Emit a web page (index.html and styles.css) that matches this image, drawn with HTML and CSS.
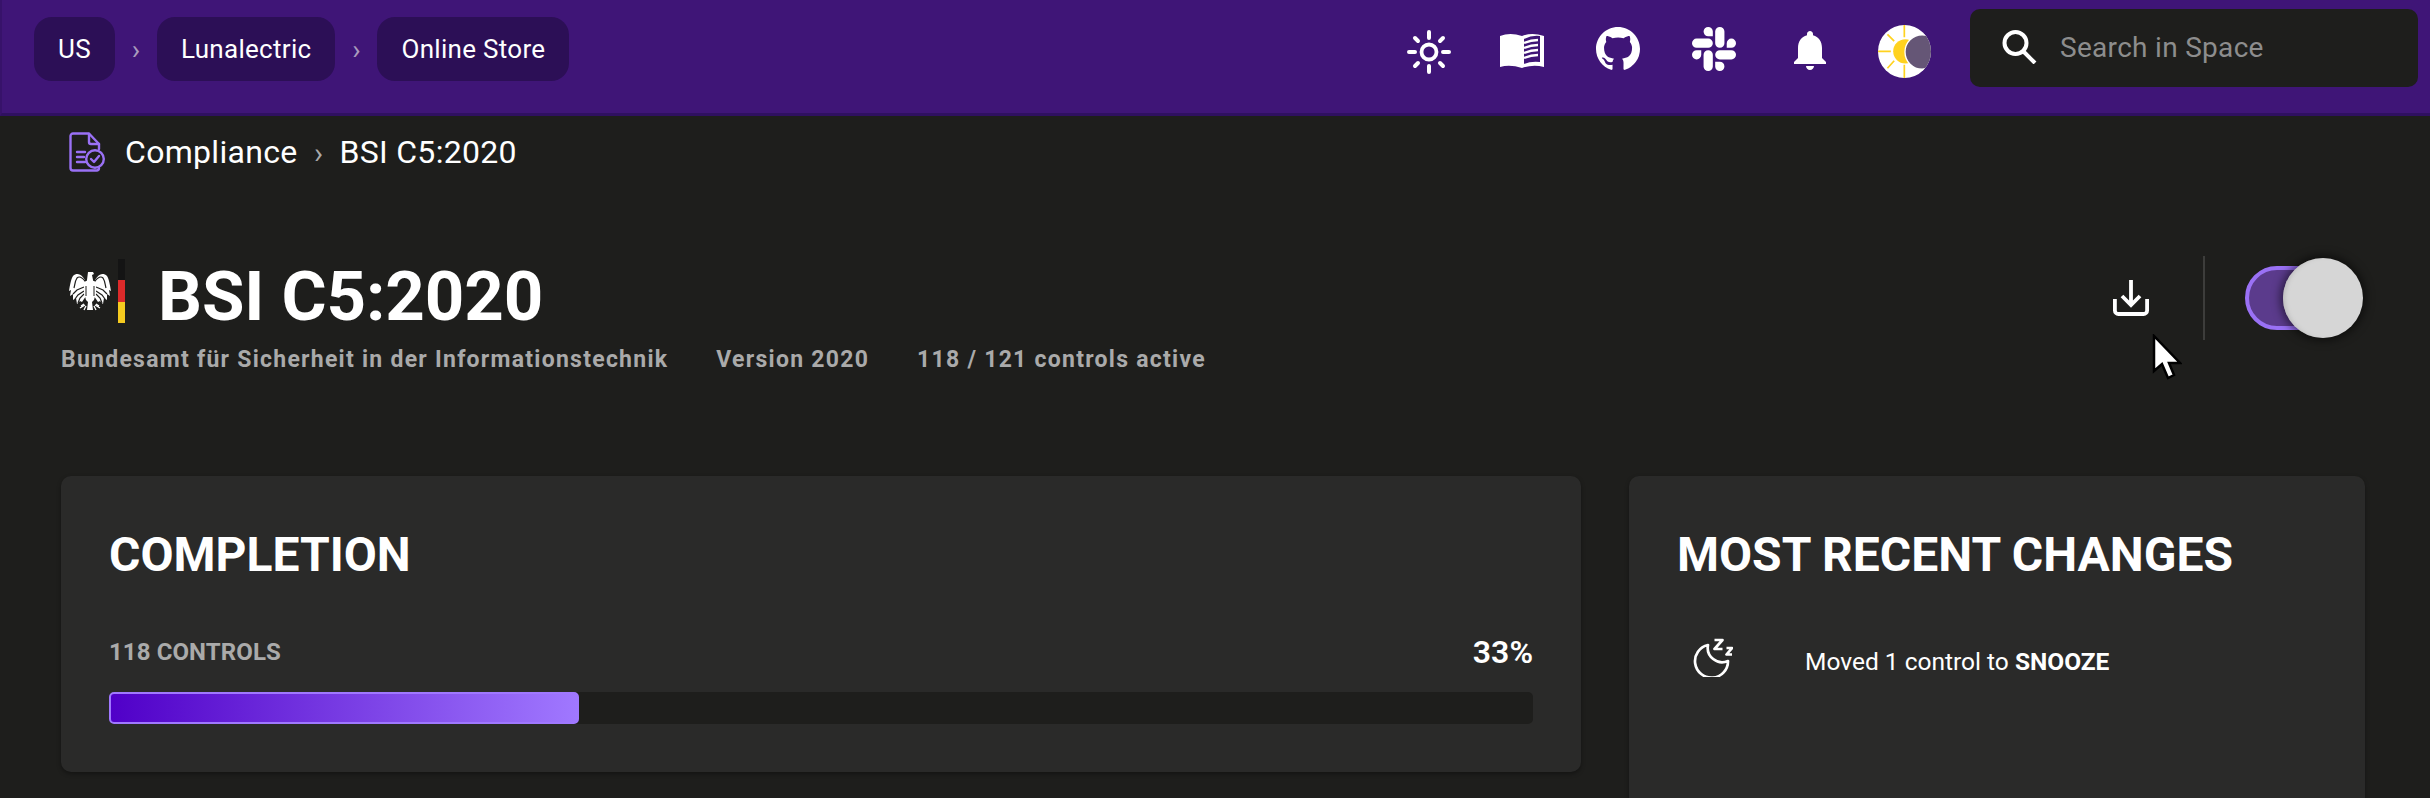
FILE: index.html
```html
<!DOCTYPE html>
<html lang="en">
<head>
<meta charset="utf-8">
<title>BSI C5:2020</title>
<link rel="stylesheet" href="styles.css">
</head>
<body>
<header class="topbar">
  <nav class="scope">
    <span class="pill">US</span><span class="sep">›</span>
    <span class="pill">Lunalectric</span><span class="sep">›</span>
    <span class="pill">Online Store</span>
  </nav>
  <div class="tools">
    <svg class="ic ic-sun" viewBox="0 0 44 44" width="44" height="44" fill="none" stroke="#fff" stroke-linecap="round">
      <circle cx="22" cy="22" r="7.500" stroke-width="3.800"/>
      <path stroke-width="4" d="M22 2v6M22 36v6M2 22h6M36 22h6M8 8l3 3M36 8l-3 3M8 36l3-3M36 36l-3-3"/>
    </svg>
    <svg class="ic ic-book" viewBox="0 0 44 35" width="44" height="35">
      <path fill="#fff" d="M0 3Q10-1 22 3 32-1 44 3V34Q33 31 22 35 10 31 0 34Z"/>
      <path fill="#3f1577" d="M24 6Q32 2 40 3V29Q31 28 24 31Z"/>
      <path fill="none" stroke="#fff" stroke-width="2.400" d="M24 10Q31 7 38 7M24 15Q31 12 38 12M24 20Q31 17 38 17M24 25Q31 22 38 22"/>
    </svg>
    <svg class="ic" viewBox="0 0 16 16" width="44" height="44"><path fill="#fff" d="M8 0C3.580 0 0 3.580 0 8c0 3.540 2.290 6.530 5.470 7.590.4.070.55-.17.55-.38 0-.19-.01-.82-.01-1.490-2.010.37-2.530-.49-2.690-.94-.09-.23-.48-.94-.82-1.130-.28-.15-.68-.52-.01-.53.63-.01 1.080.58 1.230.82.72 1.210 1.870.87 2.330.66.07-.52.28-.87.51-1.070-1.780-.2-3.640-.89-3.640-3.950 0-.87.31-1.590.82-2.150-.08-.2-.36-1.020.08-2.120 0 0 .67-.21 2.200.82.64-.18 1.320-.27 2-.27.68 0 1.360.09 2 .27 1.530-1.040 2.200-.82 2.200-.82.44 1.100.16 1.920.08 2.120.51.56.82 1.270.82 2.150 0 3.070-1.870 3.750-3.650 3.950.29.25.54.73.54 1.480 0 1.070-.01 1.930-.01 2.200 0 .21.15.46.55.38A8.013 8.013 0 0016 8c0-4.420-3.580-8-8-8z"/></svg>
    <svg class="ic" viewBox="0 0 24 24" width="44" height="44"><path fill="#fff" d="M5.042 15.165a2.528 2.528 0 0 1-2.520 2.523A2.528 2.528 0 0 1 0 15.165a2.527 2.527 0 0 1 2.522-2.520h2.520v2.520zM6.313 15.165a2.527 2.527 0 0 1 2.521-2.520 2.527 2.527 0 0 1 2.521 2.520v6.313A2.528 2.528 0 0 1 8.834 24a2.528 2.528 0 0 1-2.521-2.522v-6.313zM8.834 5.042a2.528 2.528 0 0 1-2.521-2.520A2.528 2.528 0 0 1 8.834 0a2.528 2.528 0 0 1 2.521 2.522v2.520H8.834zM8.834 6.313a2.528 2.528 0 0 1 2.521 2.521 2.528 2.528 0 0 1-2.521 2.521H2.522A2.528 2.528 0 0 1 0 8.834a2.528 2.528 0 0 1 2.522-2.521h6.312zM18.956 8.834a2.528 2.528 0 0 1 2.522-2.521A2.528 2.528 0 0 1 24 8.834a2.528 2.528 0 0 1-2.522 2.521h-2.522V8.834zM17.688 8.834a2.528 2.528 0 0 1-2.523 2.521 2.527 2.527 0 0 1-2.520-2.521V2.522A2.527 2.527 0 0 1 15.165 0a2.528 2.528 0 0 1 2.523 2.522v6.312zM15.165 18.956a2.528 2.528 0 0 1 2.523 2.522A2.528 2.528 0 0 1 15.165 24a2.527 2.527 0 0 1-2.520-2.522v-2.522h2.520zM15.165 17.688a2.527 2.527 0 0 1-2.520-2.523 2.526 2.526 0 0 1 2.520-2.520h6.313A2.527 2.527 0 0 1 24 15.165a2.528 2.528 0 0 1-2.522 2.523h-6.313z"/></svg>
    <svg class="ic ic-bell" viewBox="0 0 24 24" width="48" height="48"><path fill="#fff" d="M12 22c1.100 0 2-.9 2-2h-4c0 1.100.89 2 2 2zm6-6v-5c0-3.070-1.640-5.640-4.500-6.320V4c0-.83-.67-1.500-1.500-1.500s-1.500.67-1.500 1.500v.68C7.630 5.360 6 7.920 6 11v5l-2 2v1h16v-1l-2-2z"/></svg>
    <svg class="ic ic-avatar" viewBox="0 0 157 157" width="53" height="53">
      <defs><clipPath id="disc"><circle cx="78.500" cy="78.500" r="78.500"/></clipPath></defs>
      <g clip-path="url(#disc)">
        <rect width="157" height="157" fill="#fff"/>
        <path stroke="#ffd21f" stroke-width="5" d="M78 0v36M78 118v39M0 78h38M28 28l20 20M28 128l20-22"/>
        <circle cx="81" cy="78" r="36" fill="#ffd21f"/>
        <circle cx="131" cy="80" r="51" fill="#655676" stroke="#fff" stroke-width="4"/>
      </g>
    </svg>
  </div>
  <div class="search">
    <svg viewBox="0 0 35 34" width="35" height="34" fill="none" stroke="#fff"><circle cx="13.500" cy="13" r="11" stroke-width="4"/><path stroke-width="4" d="M21 21l12 12"/></svg>
    <span class="search-text">Search in Space</span>
  </div>
</header>

<main class="main">
  <div class="crumbs">
    <svg viewBox="0 0 36 40" width="36" height="40" fill="none" stroke="#9a71f5" stroke-width="2.400" stroke-linejoin="round" stroke-linecap="round">
      <path d="M30 12 20 1.500H4A2.500 2.500 0 0 0 1.500 4v32A2.500 2.500 0 0 0 4 38.500h24A2.500 2.500 0 0 0 30 36"/>
      <path d="M20 2v8a2 2 0 0 0 2 2h8v5"/>
      <circle cx="26" cy="27" r="8.800"/>
      <path d="M8 20h8M8 25h7M8 30h8M22 27l3 3 5-6"/>
    </svg>
    <span class="crumb">Compliance</span>
    <span class="crumb-sep">›</span>
    <span class="crumb">BSI C5:2020</span>
  </div>

  <section class="head">
    <div class="head-left">
      <div class="title-row">
        <svg class="eagle" viewBox="0 0 42 40" width="42" height="40">
          <g id="half">
            <path fill="#fff" d="M17 12C15 5 9 0 4 5 2 8 1 14 0 20l2-1-1 6 3-2v6l3-2 1 6 3-3 2 1 4-6Z"/>
            <path fill="none" stroke="#1e1e1c" stroke-width="1.200" d="M16 10C13 6 10 5 8 7 6 10 6 13 5 17M15 16 8 19 4 23M15 20 9 24 6 28M15 23 11 27 9 32"/>
            <path fill="none" stroke="#fff" stroke-width="1.300" d="M15 33l-3 2M16 34l-5 3M17 35l-2 4"/>
          </g>
          <use href="#half" transform="matrix(-1 0 0 1 42 0)"/>
          <path fill="#fff" d="M19 1h5l1 2-2 1 1 5 3 3v10l-2 7-2 2 1 8h-6l1-8-2-2-2-7V12l3-3Z"/>
          <path fill="none" stroke="#1e1e1c" stroke-width="1" d="M17 15v10M25 15v10M15 10l3-1M27 10l-3-1"/>
        </svg>
        <span class="flag"><i class="flag-k"></i><i class="flag-r"></i><i class="flag-y"></i></span>
        <h1 class="title">BSI C5:2020</h1>
      </div>
      <div class="meta">
        <span>Bundesamt für Sicherheit in der Informationstechnik</span>
        <span>Version 2020</span>
        <span>118 / 121 controls active</span>
      </div>
    </div>
    <div class="actions">
      <svg viewBox="0 0 36 36" width="36" height="36" fill="none" stroke="#fff" stroke-width="3.800"><path d="M18 0v24M9 16l9 9 9-9"/><path d="M1.900 19v11.500a3.500 3.500 0 0 0 3.500 3.500h25.200a3.500 3.500 0 0 0 3.500-3.500V19"/></svg>
      <span class="divider"></span>
      <span class="toggle"><span class="track"></span><span class="knob"></span></span>
    </div>
  </section>

  <section class="cards">
    <article class="card">
      <h2 class="card-title">COMPLETION</h2>
      <div class="progress-row">
        <span class="progress-label">118 CONTROLS</span>
        <span class="progress-value">33%</span>
      </div>
      <div class="bar"><div class="bar-fill" style="width:33%"></div></div>
    </article>
    <article class="card card-tall">
      <h2 class="card-title">MOST RECENT CHANGES</h2>
      <div class="change">
        <svg viewBox="0 0 40 39" width="40" height="39" fill="none" stroke="#fff" stroke-width="2.700" stroke-linejoin="round">
          <path d="M15 7A16.500 16.500 0 1 0 35 23 14.500 14.500 0 0 1 15 7Z"/>
          <path d="M21.500 2h8l-8 9h8M33.500 10h5.500l-5.500 6.500h5.500"/>
        </svg>
        <span class="change-text">Moved 1 control to <b>SNOOZE</b></span>
      </div>
    </article>
  </section>
</main>

<svg class="cursor" viewBox="0 0 30 46" width="30" height="46">
  <path fill="#fff" stroke="#000" stroke-width="2.500" d="M2 2V37L10 30 16 44 22 41 17 29H28Z"/>
</svg>
</body>
</html>
```
FILE: styles.css
```css
* { box-sizing: border-box; }
html, body { margin: 0; height: 798px; overflow: hidden; }
body {
  background: #1e1e1c;
  color: #fff;
  font-family: Roboto, "Liberation Sans", sans-serif;
  position: relative;
}

.topbar {
  height: 116px;
  background: #3f1577;
  border-left: 2px solid #37126a;
  border-bottom: 3px solid #2f1060;
  display: flex;
  align-items: center;
  padding: 0 12px 15px 32px;
}
.scope { display: flex; align-items: center; }
.pill {
  height: 64px;
  display: flex;
  align-items: center;
  padding: 0 24px;
  background: #2c0f56;
  border-radius: 18px;
  font-size: 26px;
  letter-spacing: .3px;
}
.sep { width: 42px; text-align: center; color: #a99bbd; font-size: 28px; }

.tools { margin-left: auto; display: flex; align-items: center; gap: 52px; }
.ic { display: block; flex: none; }
.ic-sun { margin-right: -3px; margin-top: 6px; }
.ic-book { margin-top: 3px; }
.ic-bell { margin: 1px -2px 0; }
.ic-avatar { margin-left: -6px; margin-top: 4px; }

.search {
  width: 448px;
  height: 78px;
  margin: 0 0 2px 39px;
  background: #1e1e1c;
  border-radius: 10px;
  display: flex;
  align-items: center;
  gap: 23px;
  padding: 0 0 2px 32px;
}
.search-text { color: #8d8d8d; font-size: 28px; letter-spacing: .3px; }

.main { padding: 0 65px 0 61px; }
.crumbs { display: flex; align-items: center; height: 40px; margin: 16px 0 0 8px; }
.crumbs svg { margin-right: 20px; }
.crumb { font-size: 32px; letter-spacing: .3px; }
.crumb-sep { width: 42px; text-align: center; color: #aaa; font-size: 30px; }

.head { display: flex; justify-content: space-between; margin-top: 84px; padding-right: 2px; }
.title-row { display: flex; align-items: center; height: 64px; margin: 3px 0 0 8px; }
.flag { display: flex; flex-direction: column; width: 7px; height: 64px; margin: 0 33px 0 7px; }
.flag i { flex: 1; }
.flag-k { background: #141414; }
.flag-r { background: #dc2a2a; }
.flag-y { background: #f5ca1f; }
.title { margin: 11px 0 0; font-size: 69px; font-weight: 700; line-height: 64px; letter-spacing: -.1px; }
.meta {
  display: flex;
  gap: 48px;
  margin-top: 22px;
  line-height: 30px;
  font-size: 23px;
  font-weight: 700;
  letter-spacing: 1.260px;
  color: #aaa;
}
.actions { display: flex; align-items: center; height: 84px; }
.divider { width: 2px; height: 84px; background: #3d3d3b; margin: 0 40px 0 54px; }
.toggle { position: relative; display: block; width: 118px; height: 80px; }
.track {
  position: absolute;
  left: 0;
  top: 8px;
  width: 100px;
  height: 64px;
  border-radius: 32px;
  border: 4px solid #9a71f5;
  background: #5b3b8c;
}
.knob {
  position: absolute;
  right: 0;
  top: 0;
  width: 80px;
  height: 80px;
  border-radius: 50%;
  background: #d6d6d6;
  box-shadow: inset 4px 0 4px -2px #bdbdbd, 0 0 8px 3px rgba(0,0,0,.5);
}

.cards { display: grid; grid-template-columns: 1520px 736px; gap: 48px; margin-top: 101px; align-items: start; }
.card {
  background: #2a2a29;
  border-radius: 10px;
  padding: 51px 48px 48px;
  box-shadow: 0 2px 4px rgba(0,0,0,.35);
}
.card-tall { min-height: 420px; }
.card-title { margin: 0; font-size: 48px; line-height: 56px; font-weight: 700; }
.progress-row { display: flex; justify-content: space-between; align-items: center; height: 30px; margin-top: 54px; }
.progress-label { font-size: 24px; font-weight: 700; color: #aaa; letter-spacing: .1px; }
.progress-value { font-size: 32px; font-weight: 600; }
.bar { height: 32px; margin-top: 25px; background: #1e1e1c; border-radius: 5px; }
.bar-fill {
  height: 100%;
  border: 2px solid #a078ff;
  border-radius: 5px;
  background: linear-gradient(90deg, #5000c8, #a078ff);
}
.change { display: flex; align-items: center; height: 44px; margin: 52px 0 0 16px; gap: 72px; }
.change-text { font-size: 24.5px; margin-top: 8px; }
.change-text b { font-weight: 700; }

.cursor { position: absolute; left: 2152px; top: 334px; }
```
